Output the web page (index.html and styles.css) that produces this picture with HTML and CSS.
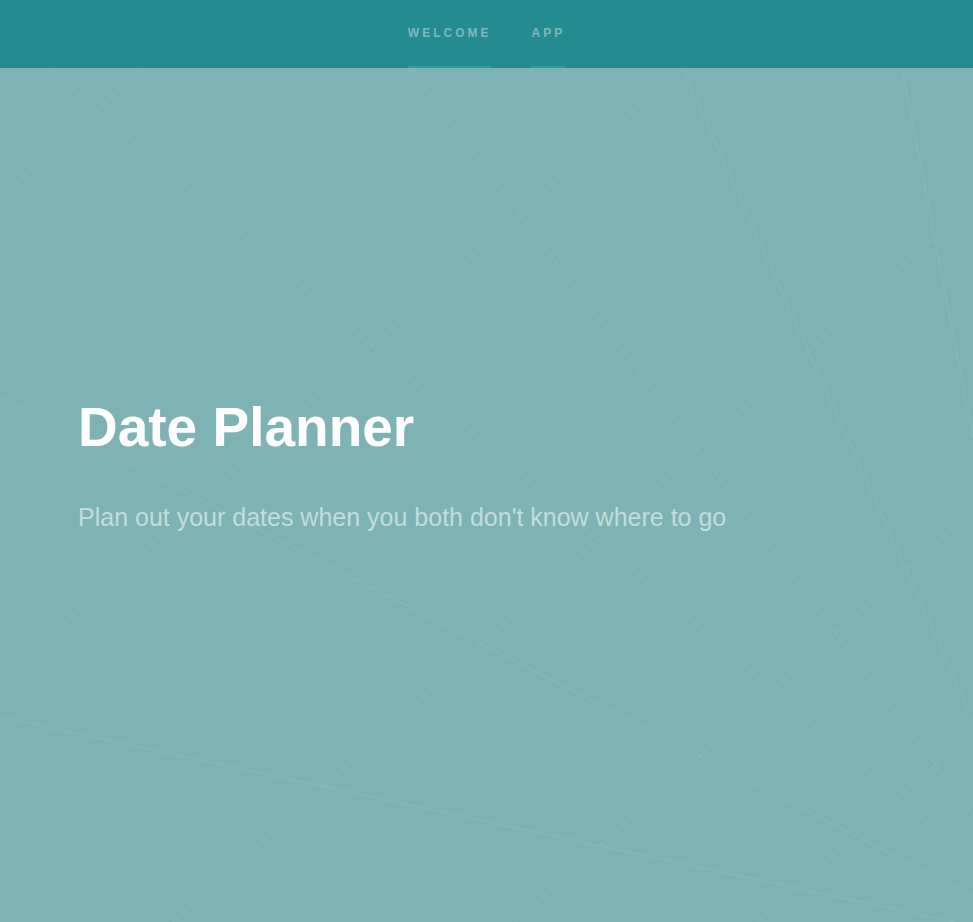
FILE: index.html
```html
<!DOCTYPE html>
<html lang="en">
<head>
<meta charset="utf-8">
<title>Date Planner</title>
<link rel="stylesheet" href="styles.css">
</head>
<body>
<nav class="topbar">
  <a class="nav-link" href="#">WELCOME</a>
  <a class="nav-link" href="#">APP</a>
</nav>
<main class="hero">
  <svg class="hero-lines" viewBox="0 68 973 854" preserveAspectRatio="none" aria-hidden="true">
    <line x1="48" y1="68" x2="973" y2="862"/>
    <line x1="681" y1="68" x2="0" y2="681"/>
    <line x1="143" y1="68" x2="0" y2="198"/>
    <line x1="682" y1="68" x2="973" y2="720"/>
    <line x1="902" y1="68" x2="973" y2="438"/>
    <line x1="973" y1="202" x2="173" y2="922"/>
    <line x1="973" y1="510" x2="515" y2="922"/>
    <line x1="0" y1="397" x2="973" y2="896"/>
    <line x1="0" y1="717" x2="973" y2="926"/>
    <line x1="410" y1="68" x2="973" y2="815"/>
    <line x1="973" y1="731" x2="758" y2="922"/>
  </svg>
  <div class="hero-content">
    <h1 class="hero-title">Date Planner</h1>
    <p class="hero-sub">Plan out your dates when you both don't know where to go</p>
  </div>
</main>
</body>
</html>
```
FILE: styles.css
```css
html, body {
  margin: 0;
  padding: 0;
}
body {
  font-family: "Liberation Sans", Arial, sans-serif;
  background: #7fb2b4;
  min-height: 922px;
}
.topbar {
  height: 68px;
  background: #248b8f;
  display: flex;
  justify-content: center;
  gap: 40px;
}
.nav-link {
  display: flex;
  align-items: center;
  height: 66px;
  border-bottom: 2px solid #2aa0a3;
  font-size: 12px;
  font-weight: bold;
  letter-spacing: 3px;
  color: #7fb8ba;
  text-decoration: none;
}
.hero {
  position: relative;
  height: 854px;
  overflow: hidden;
}
.hero-lines {
  position: absolute;
  left: 0;
  top: 0;
  width: 100%;
  height: 100%;
}
.hero-lines line {
  stroke: rgba(255, 255, 255, 0.09);
  stroke-width: 1;
}
.hero-content {
  position: relative;
  padding: 326px 0 0 78px;
}
.hero-title {
  margin: 0;
  font-size: 55px;
  line-height: 66px;
  font-weight: bold;
  color: #ffffff;
}
.hero-sub {
  margin: 43px 0 0;
  font-size: 25px;
  line-height: 29px;
  color: #c4dcdd;
}
```
